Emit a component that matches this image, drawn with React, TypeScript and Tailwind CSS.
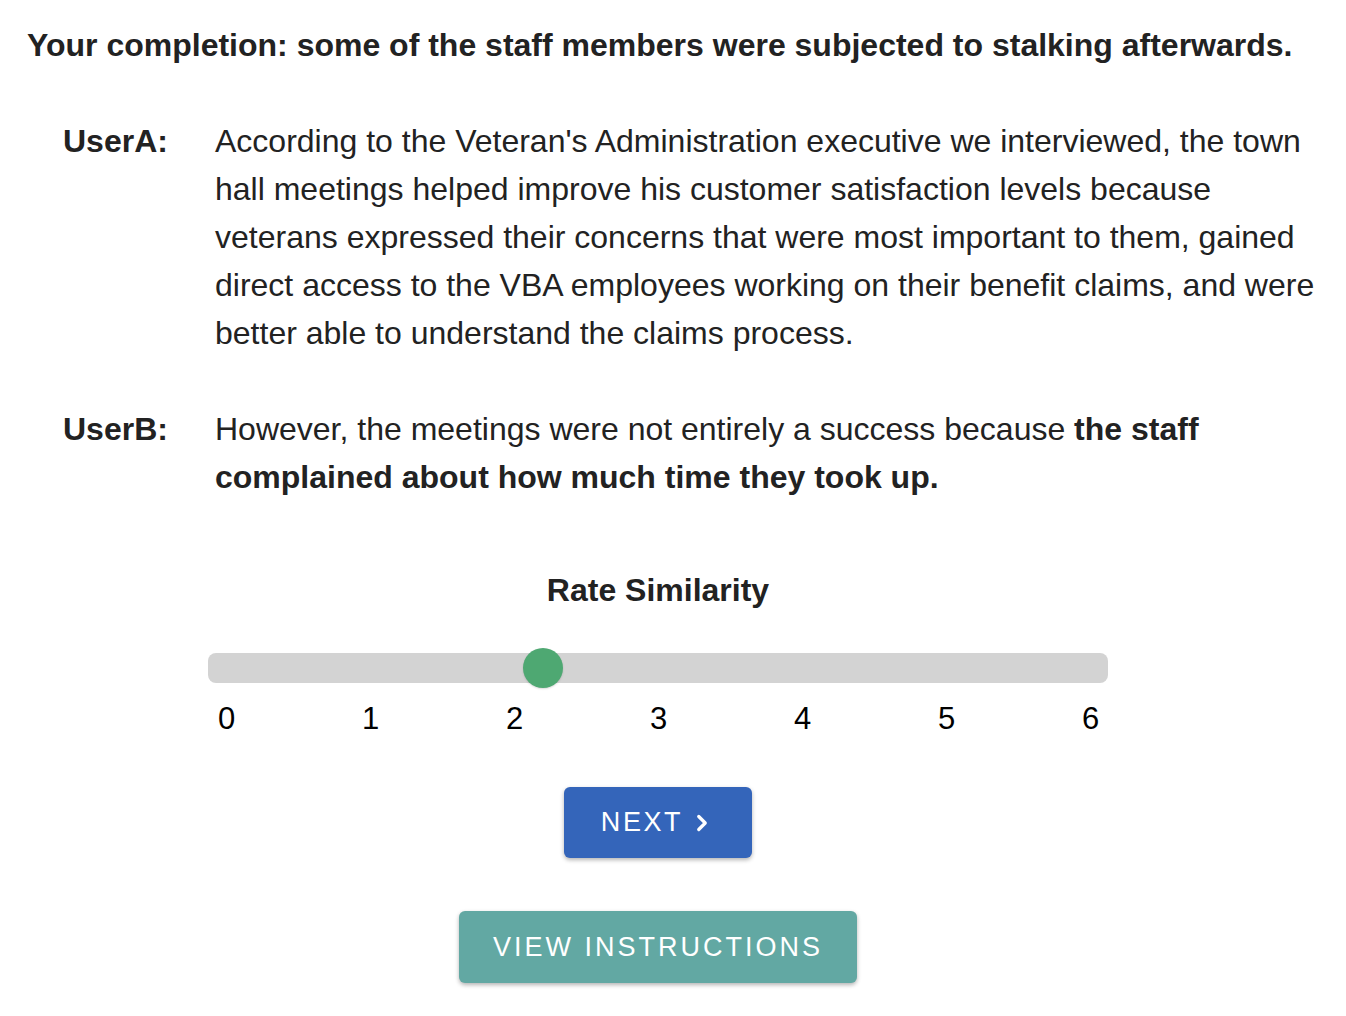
import { ChevronRight } from 'lucide-react';

const ticks = [0, 1, 2, 3, 4, 5, 6];

export default function App() {
  return (
    <div className="min-h-screen bg-white text-[#222222] font-['Liberation_Sans',Arial,sans-serif] pl-[27px] pr-[20px] pt-[26px]">
      <h1 className="text-[32px] leading-[38px] font-bold">
        Your completion: some of the staff members were subjected to stalking afterwards.
      </h1>

      <div className="mt-[53px] pl-[36px] space-y-[48px]">
        <div className="flex">
          <div className="w-[152px] shrink-0 text-[32px] leading-[48px] font-bold">UserA:</div>
          <p className="w-[1112px] text-[32px] leading-[48px]">
            According to the Veteran's Administration executive we interviewed, the town hall meetings helped improve his
            customer satisfaction levels because veterans expressed their concerns that were most important to them,
            gained direct access to the VBA employees working on their benefit claims, and were better able to understand
            the claims process.
          </p>
        </div>
        <div className="flex">
          <div className="w-[152px] shrink-0 text-[32px] leading-[48px] font-bold">UserB:</div>
          <p className="w-[1112px] text-[32px] leading-[48px]">
            However, the meetings were not entirely a success because{' '}
            <strong className="font-bold">the staff complained about how much time they took up.</strong>
          </p>
        </div>
      </div>

      {/* Rating */}
      <div className="w-[1316px] -ml-[27px] flex flex-col items-center">
        <h2 className="mt-[71px] text-[32px] leading-[36px] font-bold">Rate Similarity</h2>

        <div className="mt-[45px] w-[900px]">
          <div className="relative h-[30px] rounded-[8px] bg-[#d3d3d3]">
            <div className="absolute left-[315px] top-[-5px] h-[40px] w-[40px] rounded-full bg-[#4ea872] shadow-[0_1px_2px_rgba(0,0,0,0.15)]" />
          </div>
          <div className="mt-[18px] flex justify-between px-[10px]">
            {ticks.map(t => (
              <span key={t} className="w-[16px] text-center text-[31px] leading-[36px] text-black">
                {t}
              </span>
            ))}
          </div>
        </div>

        <button className="mt-[50px] flex h-[71px] w-[188px] items-center justify-center gap-[6px] rounded-[6px] bg-[#3465ba] text-[27px] tracking-[2.6px] text-white shadow-[0_2px_4px_rgba(0,0,0,0.3)]">
          NEXT
          <ChevronRight className="h-[26px] w-[26px]" strokeWidth={3} />
        </button>

        <button className="mt-[53px] h-[72px] w-[398px] rounded-[6px] bg-[#62a8a3] text-[27px] tracking-[3px] text-white shadow-[0_2px_4px_rgba(0,0,0,0.3)]">
          VIEW INSTRUCTIONS
        </button>
      </div>
    </div>
  );
}
